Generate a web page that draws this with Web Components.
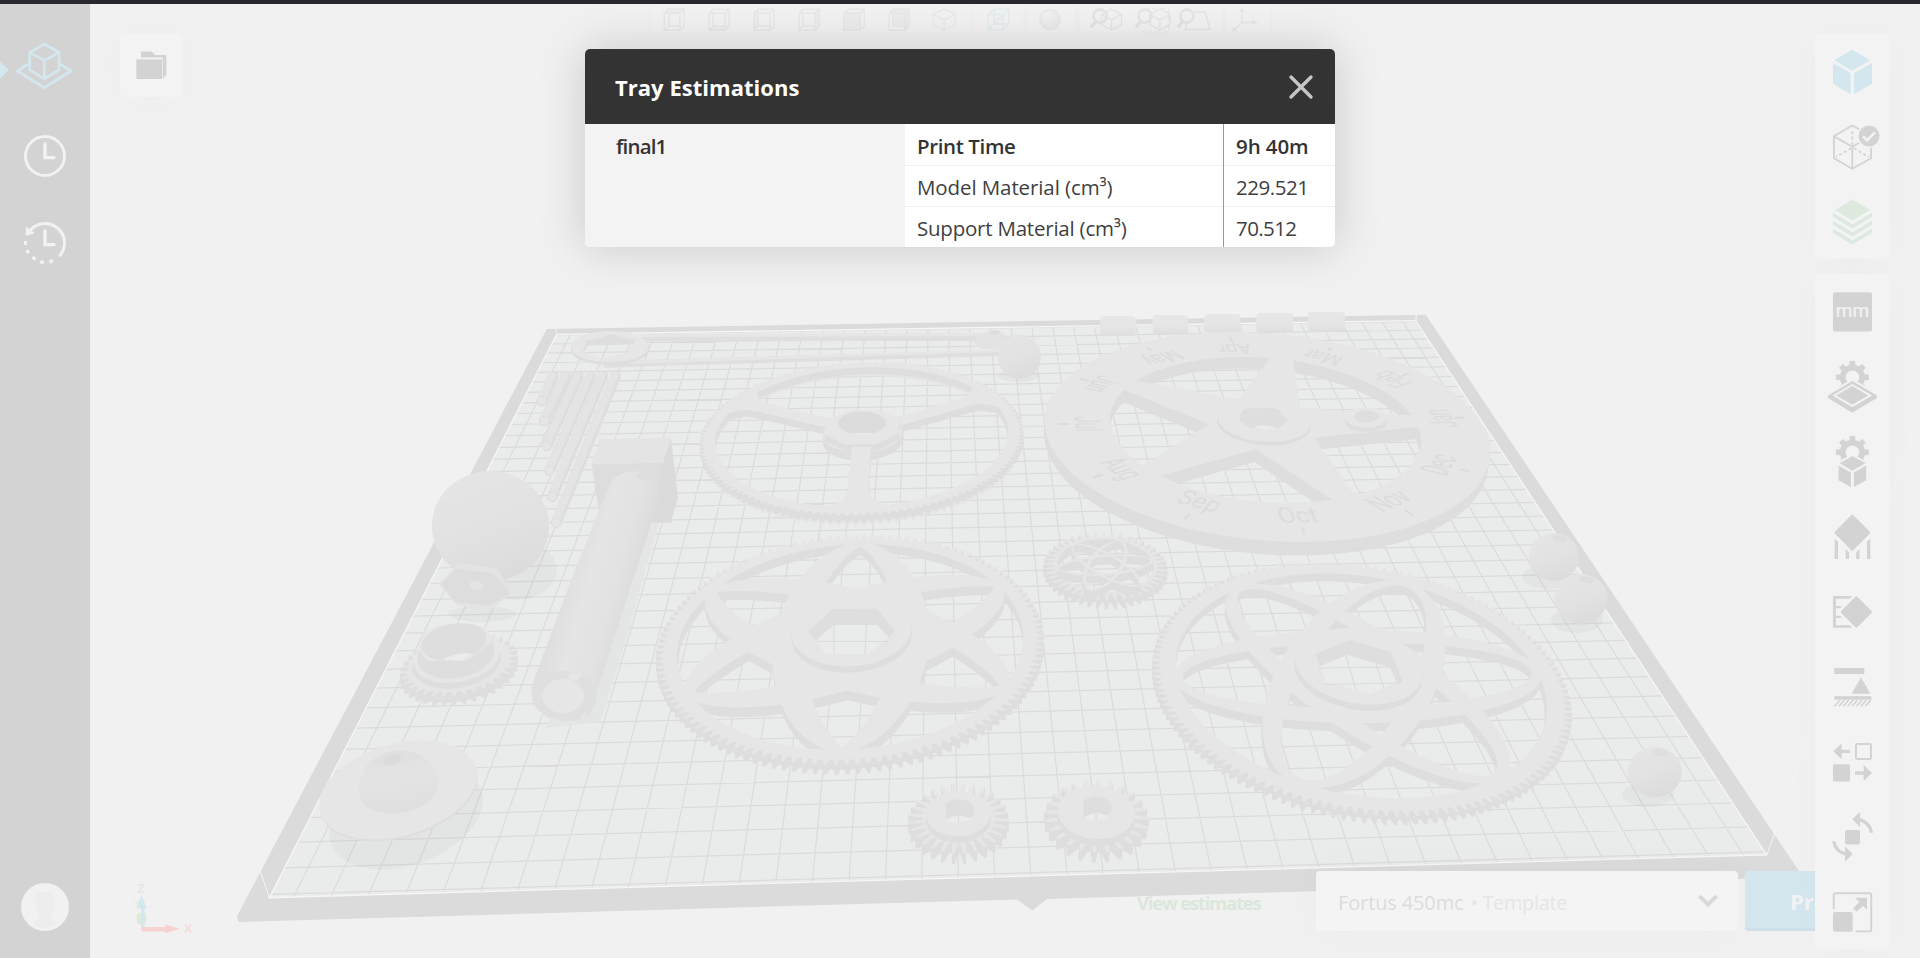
<!DOCTYPE html>
<html lang="en">
<head>
<meta charset="utf-8">
<title>Tray Estimations</title>
<style>
html,body{margin:0;height:100%;overflow:hidden;background:#f1f1f1}
body{font-family:"Open Sans","Noto Sans",sans-serif;color:#333}
</style>
</head>
<body>
<print-app>
  <side-nav slot="nav"></side-nav>
  <tray-scene slot="scene"></tray-scene>
  <view-toolbar slot="toolbar"></view-toolbar>
  <folder-button slot="folder"></folder-button>
  <tool-rail slot="rail"></tool-rail>
  <print-bar slot="print"></print-bar>
  <estimate-dialog slot="dialog" heading="Tray Estimations">
    <span slot="name"><fit-text width="49">final1</fit-text></span>
    <estimate-row strong><fit-text width="97">Print Time</fit-text><fit-text slot="value" width="71">9h 40m</fit-text></estimate-row>
    <estimate-row><fit-text width="194">Model Material (cm³)</fit-text><fit-text slot="value" width="71">229.521</fit-text></estimate-row>
    <estimate-row><fit-text width="208">Support Material (cm³)</fit-text><fit-text slot="value" width="59">70.512</fit-text></estimate-row>
  </estimate-dialog>
</print-app>
<script>
const define = (name, html, extra) => customElements.define(name, class extends HTMLElement {
  constructor(){ super(); this.attachShadow({mode:'open'}).innerHTML = typeof html === 'function' ? html(this) : html; }
  connectedCallback(){ if (extra) extra(this); }
});

define('print-app', `<style>
:host{display:grid;grid-template:4px 954px / 90px 1fr;width:1920px;height:958px;position:relative;overflow:hidden}
.top{grid-column:1/3;background:#29282f;position:relative}
.stage{position:relative}
.layer{position:absolute}
.scene{left:-90px;top:-4px}
.tb{left:562px;top:0}
.folder{left:30px;top:30px}
.print{right:50px;top:867px}
.rail{right:30px;top:30px}
.dialog{left:495px;top:45px}
</style>
<div class="top"></div><slot name="nav"></slot>
<main class="stage">
<div class="layer scene"><slot name="scene"></slot></div>
<div class="layer tb"><slot name="toolbar"></slot></div>
<div class="layer folder"><slot name="folder"></slot></div>
<div class="layer print"><slot name="print"></slot></div>
<div class="layer rail"><slot name="rail"></slot></div>
<div class="layer dialog"><slot name="dialog"></slot></div>
</main>`);

define('side-nav', `<style>
:host{display:flex;flex-direction:column;background:#d3d3d3;padding-top:22px;box-sizing:border-box;height:954px;position:relative;z-index:1}
svg{display:block;flex:none}
.user{margin-top:auto}
</style>
<svg width="90" height="88" viewBox="0 26 90 88" fill="none" stroke="#d5e7ee" stroke-width="2.7" stroke-linejoin="round">
<path d="M0 61L8.7 70L0 79Z" fill="#d5e7ee" stroke="none"/>
<path d="M44.3 44L59 52.3V70L44.3 78.8L29.7 70V52.3ZM29.7 52.3L44.3 60.7L59 52.3M44.3 60.7V78.8M28.5 64L17.3 71L44.3 87.7L71 71L60 64"/></svg>
<svg width="90" height="86" viewBox="0 114 90 86" fill="none" stroke="#f2f2f2" stroke-width="3">
<circle cx="45" cy="156" r="19.5"/><path d="M45 144V157.6H54" stroke-width="3.4" stroke-linecap="round"/></svg>
<svg width="90" height="86" viewBox="0 200 90 86" fill="none" stroke="#f2f2f2" stroke-width="3">
<path d="M30.5 230A19.5 19.5 0 0 1 45 223.500A19.5 19.5 0 0 1 59.3 256.300"/><path d="M25.8 226.5V235.8L34.8 233.3Z" fill="#f2f2f2" stroke="none"/>
<path d="M25.5 241V245M26.8 250L28.6 253.2M32.5 256.8L35.5 259.6M40.2 261.9L44 262.3M49.5 262L53 260.6" stroke-width="3.2"/>
<path d="M45 231V244.6H54" stroke-width="3.4" stroke-linecap="round"/></svg>
<svg class="user" width="90" height="80" viewBox="0 878 90 80"><circle cx="45" cy="907" r="24" fill="#f1f1f1"/>
<path d="M35.5 896Q36 892 40 892H50Q54 892 54.3 896V909Q53 913 50.5 915Q50 920 57 922Q57 925 45 929Q33 925 33 922Q40 920 39.5 915Q36 912 35.5 909Z" fill="#ededed"/></svg>`);

define('folder-button', `<style>:host{display:block;width:63px;height:63px;border-radius:5px;background:#f3f3f3;box-shadow:0 0 42px rgba(0,0,0,.02)}svg{display:block}</style>
<svg width="63" height="63" fill="#d3d3d3"><path d="M16.3 25.4H42V45H16.3Z"/><path d="M21 17.4H31.8L35 21H46.3V40.8L42.7 44.8V23.4H21Z"/></svg>`);

/* One cube outline per standard view; the shaded face marks the view. */
const tIcon = inner => `<svg width="45" height="29" viewBox="-9 0 45 29">${inner}</svg>`;
const box = (shade) => tIcon(`<g fill="none" stroke="#e7e7e7" stroke-width="1.4"><path d="M3.2 9.2L7 5.2H23.2V22L19 26.2H3.2ZM3.2 9.2H19V26.2M19 9.2L23.2 5.2"/>${shade}</g>`);
const zoomGlass = (x) => `<g fill="none" stroke="#e4e4e4"><circle cx="${x+8}" cy="12" r="6.6" stroke-width="2.6"/><path d="M${x+4} 17L${x-1} 23.5" stroke-width="3.6"/></g>`;
const smallCube = 'M20 5L30 10.5V20.5L20 26L10 20.5V10.5ZM10 10.5L20 16L30 10.5M20 16V26';
define('view-toolbar', `<style>
:host{display:flex;height:29px}
div{display:flex;background:#f2f2f2;box-shadow:0 1px 14px rgba(0,0,0,.014);border-radius:0 0 4px 4px;margin-right:3px}
.views{padding-right:4px}.wire{padding:0 2px;margin-right:5px}.shade{padding-right:2px;margin-right:5px}.zoom{padding-left:4px}
svg{display:block;flex:none}</style>
<div class="views">
${box('<path d="M3.2 9.2L7 5.2H23.2L19 9.2Z" fill="#ededed"/><path d="M8 10V22L4 26M8 22H19"/>')}
${box('<path d="M3.2 26.2L7 22H23.2L19 26.2Z" fill="#ededed"/><path d="M7 22V10"/>')}
${box('<path d="M3.2 9.2L7 5.2V22L3.2 26.2Z" fill="#ededed"/><path d="M7 22H19"/>')}
${box('<path d="M19 9.2L23.2 5.2V22L19 26.2Z" fill="#ededed"/><path d="M7 22H19M7 10V22L3 26"/>')}
${box('<path d="M3.2 9.2H19V26.2H3.2Z" fill="#ececec"/>')}
${box('<path d="M7 5.2H23.2V22H7Z" fill="#ececec"/><path d="M3.2 9.2H19V26.2"/>')}
${tIcon('<path d="M13.3 4.6L24.3 10.3V20.7L13.3 26.6L2.3 20.7V10.3ZM2.3 10.3L13.3 16L24.3 10.3M13.3 16V26.6" fill="none" stroke="#e8e8e8" stroke-width="1.3"/>')}
</div>
<div class="wire">${tIcon('<g fill="none" stroke="#e2ebef" stroke-width="1.3"><path d="M3 10.5L9 5.2H24V20L18 26.2H3ZM3 10.5H18V26.2M18 10.5L24 5.2M9 5.2V20M9 20H24M3 26L18 10.5"/></g>')}</div>
<div class="shade"><svg width="45" height="29"><defs><radialGradient id="s" cx=".4" cy=".32"><stop offset="0" stop-color="#f2f2f2"/><stop offset="1" stop-color="#eaeaea"/></radialGradient></defs><circle cx="22" cy="15.500" r="10.3" fill="url(#s)" stroke="#e6e6e6"/></svg></div>
<div class="zoom">
<svg width="49" height="29">${zoomGlass(8)}<path transform="translate(7.5 0)" d="${smallCube}" fill="none" stroke="#e5e5e5" stroke-width="1.4"/></svg>
<svg width="44" height="29">${zoomGlass(4)}<path transform="translate(7 0)" d="${smallCube}" fill="none" stroke="#e5e5e5" stroke-width="1.4"/><path d="M11 4.500H35.500V28H9" fill="none" stroke="#e7e7e7" stroke-width="1.4" stroke-dasharray="5 3"/></svg>
<svg width="45" height="29">${zoomGlass(2)}<path d="M17 8H28L33 25.5H8L10 19" fill="none" stroke="#e5e5e5" stroke-width="1.5"/></svg>
</div>
<div>${tIcon('<g transform="translate(-4 0)"><path d="M12 6V18.5L5 25M12 18.5H24" fill="none" stroke="#e8e8e8" stroke-width="1.5"/><path d="M12 3L15 8H9ZM28 18.5L22 15.5V21.5ZM2 28L3 22.5L7.5 26.5Z" fill="#e7e7e7"/></g>')}</div>`);

/* A toothed wheel outline for the settings icons. */
function cog(cx, cy){
  let d = '';
  for (let i = 0; i < 8; i++){
    for (const [o, r] of [[-.39,12.2],[-.2,12.6],[-.16,16.2],[.16,16.2],[.2,12.6],[.39,12.2]]){
      const a = i*Math.PI/4 - Math.PI/2 + o;
      d += (d ? 'L' : 'M') + (cx + r*Math.cos(a)).toFixed(1) + ' ' + (cy + r*Math.sin(a)).toFixed(1);
    }
  }
  return `<path d="${d}ZM${cx-7} ${cy}a7 7 0 1 0 14 0a7 7 0 1 0 -14 0Z" fill-rule="evenodd" stroke="#d3d3d3" stroke-width=".6"/>`;
}
const rail = [
[
`<g fill="#d5e7ee"><path d="M37.3 15.8L55.2 26.3L37.3 36.7L19.5 26.3ZM18 29L35.7 38.9V60.3L18 49.7ZM57 29L39 38.9V60.3L57 49.7Z"/></g>`,
`<g fill="none" stroke="#d3d3d3" stroke-width="1.8"><path d="M44 20.2L37.3 16.5L18.9 27.3V49.3L37.3 59.7L56.1 49.3V38.8M18.9 27.3L37.3 37.7L44 34M37.3 37.7V59.7"/><path d="M37.3 36V20M36 39.2L21 48M39 39.2L54 48" stroke-dasharray="3 2.4"/></g><circle cx="54" cy="27" r="10.5" fill="#d3d3d3"/><path d="M48 27.3L52 31.5L60 23.3" fill="none" stroke="#f3f3f3" stroke-width="2.6"/>`,
`<g fill="#dde8de"><path d="M37.3 15.6L55 26L37.3 36.4L20 26Z"/>${[0,8,16].map(o=>`<path transform="translate(0 ${o})" d="M18 28.7L37.3 40.2L57 28.7V32.7L37.3 44.4L18 32.7Z"/>`).join('')}</g>`
],[
`<rect x="18" y="18.3" width="39" height="39.2" rx="2"/><text x="37.5" y="43" text-anchor="middle" font-family="Roboto,sans-serif" font-weight="400" font-size="19" textLength="33.5" fill="#f3f3f3" stroke="#f3f3f3" stroke-width=".2">mm</text>`,
`${cog(37.4,28.3)}<path d="M37.3 29.5L66 47L37.3 66L9 47Z" fill="#f3f3f3"/><path d="M37.3 32L62 46.5V49L37.3 63.7L13 49V46.5ZM37.3 34.9L17.5 46.6L37.3 58.2L57.2 46.6Z" fill-rule="evenodd"/><path d="M37.3 37L53.3 46.4L37.3 55.8L21.3 46.4Z"/>`,
`${cog(37.4,28.3)}<path d="M37.3 29.8L54 39V60L37.3 66L21 60V39Z" fill="#f3f3f3"/><path d="M37.3 32L50.6 39.3L37.3 46.7L24.6 39.3ZM23.6 41.6L35.8 48.4V63L23.6 56.2ZM51.2 41.6L38.9 48.4V63L51.2 56.2Z"/>`,
`<path d="M37.3 16.8L54 33.7L37.3 50.6L20.8 33.7Z" stroke="#d3d3d3" stroke-width="2.4" stroke-linejoin="round"/><path d="M19.7 39.5L23 42.8V60H19.7ZM30.7 50L34 53.3V60H30.7ZM44.5 50L41.2 53.3V60H44.5ZM55.3 39.5L52 42.8V60H55.3Z"/>`,
`<path d="M41.4 23.7L55.6 38L41.4 52.3L27.1 38Z" stroke="#d3d3d3" stroke-width="2.6" stroke-linejoin="round"/><path d="M18 22H37L34.7 24.8H20.8V32H27L25 34.2H20.8V41.8H25L27 44H20.8V51.2H34.7L37 53.8H18Z"/>`,
`<rect x="19.3" y="19" width="30" height="6"/><path d="M46 28.3L55.4 44.8H36.7Z"/><rect x="19.3" y="47.2" width="37" height="3.5"/><path d="${[0,1,2,3,4,5,6,7].map(i=>`M${19.5+i*4.4} 57.3L${25+i*4.4} 51`).join('')}" stroke="#d3d3d3" stroke-width="1.5"/>`,
`<path d="M18.3 27.3L26.6 19.4V25.7H35V29H26.6V35.3ZM57 49L48.6 41V47.3H40V50.7H48.6V57Z"/><rect x="41" y="20" width="15" height="15" rx="1" fill="none" stroke="#d3d3d3" stroke-width="1.9"/><rect x="18" y="40.3" width="17" height="17.3" rx="1.6"/>`,
`<rect x="30" y="31" width="15" height="14.6" rx="2"/><path d="M37.3 20.3L45 13V28ZM37.8 55L30 47.6V62.8Z"/><path d="M44 20.4Q54.5 23 56.6 33.8M18.7 42.2Q20.5 52.5 31 55" fill="none" stroke="#d3d3d3" stroke-width="3.2"/>`,
`<path d="M18.8 35V21Q18.8 19.3 20.5 19.3H54.6Q56.2 19.3 56.2 21V55.8Q56.2 57.4 54.6 57.4H40.5" fill="none" stroke="#d3d3d3" stroke-width="1.9"/><rect x="18" y="38" width="19.7" height="19.8" rx="2"/><path d="M40 23.7H52V36L47.8 31.8L41.7 37.7L38.2 34.3L44.3 28Z"/>`
]];
define('tool-rail', `<style>
:host{display:flex;flex-direction:column;gap:15px;width:75px}
section{display:grid;grid-auto-rows:75px;border-radius:5px;background:#f3f3f3;box-shadow:0 0 42px rgba(0,0,0,.02)}
svg{display:block}</style>` + rail.map(g => '<section>' + g.map(i => `<svg width="75" height="75" fill="#d3d3d3">${i}</svg>`).join('') + '</section>').join(''));

define('print-bar', `<style>
:host{display:flex;align-items:stretch;height:60px;width:733px;font-size:20px;line-height:60px}
.est{width:179px;box-sizing:border-box;color:#dce7dc;font-weight:700;font-size:18.5px;line-height:64px}
.select{display:flex;width:422px;margin-right:7px;padding:0 20px 0 22px;box-sizing:border-box;background:#f4f4f4;border-radius:4px;color:#dcdcdc;box-shadow:0 0 42px rgba(0,0,0,.028);line-height:63px}
.select i{font-style:normal;color:#e6e6e6;margin-left:7px}
.select svg{margin:23px 0 0 auto}
.btn{width:125px;background:#d4e7ee;border-bottom:3px solid #cfe1e8;box-sizing:border-box;border-radius:4px;color:#f3f3f3;font-weight:700;font-size:22px;padding-left:45px;line-height:60px}</style>
<div class="est"><fit-text width="122">View estimates</fit-text></div>
<div class="select"><fit-text width="124">Fortus 450mc</fit-text><i><fit-text width="95">• Template</fit-text></i>
<svg width="20" height="14" fill="none" stroke="#d8d8d8" stroke-width="3.800"><path d="M1.5 2L10 10.5L18.500 2"/></svg></div>
<div class="btn">Print</div>`);

define('estimate-row', el => `<style>
:host{display:grid;grid-template-columns:319px 1fr;height:40px;border-bottom:1px solid #f0f0f0;line-height:42px;font-size:20.5px;color:#3f3f3f}
:host(:last-child){border-bottom:0}
:host([strong]){font-weight:600;color:#333;height:41px;line-height:45px}
.k{padding-left:12px;border-right:1px solid #999;margin-bottom:-1px}
.v{padding-left:12px}</style><div class="k"><slot></slot></div><div class="v"><slot name="value"></slot></div>`);

define('estimate-dialog', el => `<style>
:host{display:block;width:750px;height:198px;border-radius:5px;overflow:visible;box-shadow:0 0 48px rgba(0,0,0,.17)}
header{display:flex;align-items:center;justify-content:space-between;height:75px;background:#333;border-radius:5px 5px 0 0;padding:0 21px 0 30px;box-sizing:border-box;color:#fff;font-weight:700;font-size:22px}
.body{display:grid;grid-template-columns:320px 1fr;height:123px;background:#fff;border-radius:0 0 5px 5px;overflow:hidden}
.name{background:#f3f3f3;padding-left:31px;line-height:45px;font-size:20.5px;font-weight:600}
.rows{display:flex;flex-direction:column}</style>
<header><fit-text width="183">${el.getAttribute('heading') || 'Tray Estimations'}</fit-text>
<svg width="26" height="26" stroke="#c6c6c6" stroke-width="3.4" stroke-linecap="round"><path d="M3 3L23 23M23 3L3 23"/></svg></header>
<div class="body"><div class="name"><slot name="name"></slot></div><div class="rows"><slot></slot></div></div>`);

/* ---- Build tray: a 41.3 x 36.2 cell plate seen in perspective ---- */
const U = 41.3, V = 36.2, TOP = '#e6e6e6', SIDE = '#dedede';
const corner = [[556.7,334.3],[1415.7,320.7],[1766.7,855],[269.3,897.7]];
const cam = (() => {
  const [[x0,y0],[x1,y1],[x2,y2],[x3,y3]] = corner;
  const a=x1-x2,b=x3-x2,s=x0-x1+x2-x3,c=y1-y2,d=y3-y2,t=y0-y1+y2-y3,den=a*d-b*c;
  const g=(s*d-b*t)/den,h=(a*t-s*c)/den;
  return [[x1-x0+g*x1,x3-x0+h*x3,x0],[y1-y0+g*y1,y3-y0+h*y3,y0],[g,h,1]];
})();
const mat = z => { const k = z/3267, v = [969,2999,1]; return cam.map((r,i) => [r[0]/U, r[1]/V, r[2]-k*v[i]]); };
const proj = (u,v,z=0) => { const m = mat(z), w = m[2][0]*u+m[2][1]*v+m[2][2]; return [(m[0][0]*u+m[0][1]*v+m[0][2])/w,(m[1][0]*u+m[1][1]*v+m[1][2])/w]; };
const unproj = (x,y,z=0) => {
  const m = mat(z), a=m[0][0]-x*m[2][0], b=m[0][1]-x*m[2][1], c=x*m[2][2]-m[0][2], d=m[1][0]-y*m[2][0], e=m[1][1]-y*m[2][1], f=y*m[2][2]-m[1][2], q=a*e-b*d;
  return [(c*e-b*f)/q,(a*f-c*d)/q];
};
const f1 = n => n.toFixed(1);
const line = (pts, z) => 'M' + pts.map(p => proj(p[0],p[1],z).map(f1).join(' ')).join('L') + 'Z';
const scr = pts => 'M' + pts.map(p => f1(p[0])+' '+f1(p[1])).join('L') + 'Z';
/* Circle on the plane z through the left, right, top and bottom points seen on screen. */
function circleAt(z, pts){
  const p = pts.map(q => unproj(q[0],q[1],z));
  let cx = p.reduce((s,q)=>s+q[0],0)/4, cy = p.reduce((s,q)=>s+q[1],0)/4, r = 1;
  for (let k=0;k<200;k++){
    const D = p.map(q=>Math.hypot(q[0]-cx,q[1]-cy)); r = D.reduce((a,b)=>a+b)/4;
    let gx=0,gy=0; p.forEach((q,i)=>{gx+=(D[i]-r)*(q[0]-cx)/D[i];gy+=(D[i]-r)*(q[1]-cy)/D[i];});
    cx+=gx*.4; cy+=gy*.4;
  }
  return {x:cx,y:cy,r};
}
const round = (c,r,n=90,ph=0) => Array.from({length:n},(_,i)=>[c.x+r*Math.cos(ph+i*2*Math.PI/n),c.y+r*Math.sin(ph+i*2*Math.PI/n)]);
const toothed = (c,r,n,depth) => { const out=[]; for(let i=0;i<n;i++) for(const [o,k] of [[0,0],[.2,.1],[.4,1],[.62,1],[.82,.1]]){ const a=(i+o)*2*Math.PI/n, q=r-depth+depth*k; out.push([c.x+q*Math.cos(a),c.y+q*Math.sin(a)]);} return out; };
/* Solid: a set of outlines swept from the base to the top. */
function solid(parts, z0, z1, top=TOP, side=SIDE){
  const n = Math.max(4, Math.ceil((z1-z0)*1.6)); let d = '';
  for (let i=0;i<n;i++){ const z=z0+(z1-z0)*i/n; d += parts.map(p=>`<path d="${p.map(q=>line(q,z)).join('')}"/>`).join(''); }
  return `<g fill="${side}" fill-rule="evenodd">${d}</g><g fill="${top}" fill-rule="evenodd">${parts.map(p=>`<path d="${p.map(q=>line(q,z1)).join('')}"/>`).join('')}</g>`;
}
/* Closed lens along the diameter at angle a. */
function lens(c, R, a, w, p){
  const o=[]; const P=(t,s)=>{const l=R*t,h=s*R*w*Math.pow(Math.max(0,1-t*t),p);return [c.x+l*Math.cos(a)-h*Math.sin(a),c.y+l*Math.sin(a)+h*Math.cos(a)];};
  for(let i=0;i<=48;i++) o.push(P(-Math.cos(i*Math.PI/48),1));
  for(let i=1;i<48;i++) o.push(P(Math.cos(i*Math.PI/48),-1));
  return o;
}
const ball = (x,y,rx,ry=rx,hole=false) => `<ellipse cx="${x}" cy="${y}" rx="${rx}" ry="${ry}" fill="url(#ball)"/>` + (hole?`<ellipse cx="${x+3}" cy="${y-ry*.8}" rx="7" ry="3.4" fill="#dedede" transform="rotate(8 ${x} ${y})"/>`:'');
const shadow = (x,y,rx,ry,r=0) => `<ellipse cx="${x}" cy="${y}" rx="${rx}" ry="${ry}" fill="#000" opacity=".026" transform="rotate(${r} ${x} ${y})"/>`;

function buildPlate(){
  let s = `<path d="${scr([[546.7,329],[1425.7,314.7],[1803,877],[1047,899],[1032.4,910.5],[1017,899.4],[239,922],[236.7,916.7]])}" fill="#dbdbdb"/>`;
  s += `<path d="${scr(corner)}" fill="#eaeceb"/>`;
  let g='';
  for(let i=0;i<=40;i++){const a=proj(i+.65,0),b=proj(i+.65,V);g+=`M${a.map(f1)}L${b.map(f1)}`;}
  for(let i=0;i<=36;i++){const a=proj(0,i+.08),b=proj(U,i+.08);g+=`M${a.map(f1)}L${b.map(f1)}`;}
  s += `<path d="${g}" stroke="#dbdbdb" stroke-width="1.25" fill="none"/><path d="${scr(corner)}" fill="none" stroke="#f6f6f6" stroke-width="1.3"/>`;
  s += `<g fill="none" stroke="#f6f6f6" stroke-width="1"><path d="M269.300 897.700L260.500 872"/><path d="M1766.700 855L1776 830"/><g stroke="#f4f4f4"><path d="M260.500 872L220 753L190 655M1776 830L1813 720L1897 480L1920 413M556.700 334.300L552 300L545 262M1415.700 320.700L1419 296"/></g></g>`;
  return s;
}
function buildWrench(){
  const hex='M586 341L611.700 334.500L635 340L627 353.300L603 359L583 352Z';
  return `<g>
  <path d="M640 334.500L984 333.500V341L640 341.500Z" fill="#dfdfdf"/><path d="M640 334L984 333V336L640 337Z" fill="${TOP}"/>
  <path d="M604 363L640 360L1000 350V356L640 366.500L604 368Z" fill="#dfdfdf"/><path d="M620 361L1000 349.500V352L620 364Z" fill="${TOP}"/>
  <path fill-rule="evenodd" fill="${SIDE}" d="M571 346V352A39.300 16 0 0 0 649 350V344Z${hex}"/>
  <path fill-rule="evenodd" fill="${TOP}" d="M571 347A38.800 15.600 0 0 1 648.600 346A38.800 15.600 0 0 1 571 347Z${hex}"/>
  <path d="M586 341L611.700 334.500L635 340L632 344L611 338L588 344L585 351L583 352Z" fill="${SIDE}"/>
  <path d="M973 341Q985 330 995 330.500Q1004 331 1010 340L1003 349H980Z" fill="#e3e3e3"/><ellipse cx="995" cy="332" rx="5" ry="2" fill="#dcdcdc"/></g>`
  + shadow(1019,376,21,6) + ball(1019.3,356.7,21.7,22.2);
}
function buildRods(){
  const ends=[[966,303],[973,363],[981,437],[989,512],[997,590],[1009,668]], tops=[1000,1038,1075,1112,1148,1187];
  return ends.map((e,i)=>{
    const x0=220+tops[i]/3,y0=376,x1=220+e[0]/3,y1=300+e[1]/3;
    return `<path d="M${f1(x0)} ${y0}L${f1(x1)} ${f1(y1)}" stroke="#dedede" stroke-width="10.600" stroke-linecap="round"/><path d="M${f1(x0-1.2)} ${y0-.5}L${f1(x1-1.2)} ${f1(y1)}" stroke="#e4e4e4" stroke-width="7.500" stroke-linecap="round"/><circle cx="${f1(x1)}" cy="${f1(y1)}" r="4.800" fill="#e5e5e5" stroke="#dddddd" stroke-width="1"/>`;}).join('');
}
function buildShaft(){
  return `<path d="M665 500L626 640L600 722L545 728L560 700Z" fill="#e4e6e5"/>
  <path d="M591.700 464L662.700 462.700L671.700 522.700L598.500 510Z" fill="#dddddd"/><path d="M662.700 462.700L671 437.700L678 497.300L670.700 522.700H650Z" fill="#dbdbdb"/><path d="M600 439.300L671 437.700L662.700 462.700L591.700 464Z" fill="#e4e4e4"/>
  <path d="M608 488Q618 468 640 472L658 487Q660 500 654 515L590 713Q570 728 548 718Q528 705 532 685L571 580Z" fill="url(#shaft)"/>
  <path d="M531 688Q536 670 566 671Q596 675 596 700Q592 722 566 721Q537 718 532 698L537 696V691Z" fill="#dfdfdf"/><ellipse cx="563" cy="696" rx="21" ry="17" fill="#e6e6e6"/><path d="M570 672L582 674L577 681L567 679ZM580 716L587 712L584 720Z" fill="#e6e6e6"/><path d="M637 477L640 471L652 476L647 481Z" fill="#dddddd"/>`;
}
function buildThreeSpoke(){
  const z=8, c=circleAt(z,[[700,442],[1022.500,437],[867,361],[857,516]]), ri=c.r*.905;
  let s=`<g opacity=".6" fill="#e2e3e3" fill-rule="evenodd"><path d="${line(toothed(c,c.r,130,.2),-3)}${line(round(c,ri),-3)}"/></g>`;
  const ends=[[736,401],[988,395.5],[857,509]].map(p=>unproj(p[0],p[1],z));
  const spokes=ends.map(e=>{const a=Math.atan2(e[1]-c.y,e[0]-c.x),nx=-Math.sin(a),ny=Math.cos(a),o=[];
    const P=(r,h)=>o.push([c.x+r*Math.cos(a)+h*nx,c.y+r*Math.sin(a)+h*ny]);
    P(c.r*.12,.36);P(c.r*.74,.42);P(c.r*.82,.5);P(c.r*.87,.9);P(c.r*.93,1.5);P(c.r*.93,-1.5);P(c.r*.87,-.9);P(c.r*.82,-.5);P(c.r*.74,-.42);P(c.r*.12,-.36);return [o];});
  s+=solid([[toothed(c,c.r,130,.18),round(c,ri)],...spokes],0,z);
  const h=circleAt(z,[[828,438],[897,436],[862,414],[862,456]]);
  s+=solid([[round(h,h.r)]],0,z+1)+solid([[round(h,h.r,8,.39)]],z+1,z+8);
  return s+`<path d="M852 447L871 446.500L869 480H849Z" fill="${TOP}"/><ellipse cx="862" cy="423" rx="24" ry="11.300" fill="#dcdcdc"/><path d="M853 433.500L859 433H872V434.500H855Z" fill="#eaeceb"/>`;
}
function atomGear(z, ext, inner, teeth, depth, tip, w1, p1, w2, p2){
  const c=circleAt(z,ext), t=unproj(tip[0],tip[1],z), a=Math.atan2(t[1]-c.y,t[0]-c.x), R=c.r*inner;
  const parts=[[toothed(c,c.r,teeth,depth),round(c,R)]];
  for(let i=0;i<3;i++) parts.push([lens(c,R*1.02,a+i*Math.PI/3,w1,p1),lens(c,R*.97,a+i*Math.PI/3,w2,p2)]);
  return {c,R,a,svg:solid(parts,0,z)};
}
function buildGearB(){
  const z=9, g=atomGear(z,[[657.500,652],[1042.500,641],[860,533.500],[846.6,766]],.893,124,.25,[860,543],.44,.55,.27,.8);
  const e=circleAt(z+6,[[792,632],[911,631],[852,596],[847,666.5]]);
  return g.svg+solid([[round(e,e.r),round(e,e.r*.71,6,0)]],z,z+6)
  +`<path d="${scr([[808,631],[834,609],[877,609],[895,631],[888,638],[877,625],[834,625],[817,641]])}" fill="#dedede"/>`+`<path d="${scr([[817,639],[834,625],[877,625],[888,637],[869,654],[825,654]])}" fill="#eaeceb"/><path d="M834 625V654M866.500 625L865 654M818 641.500H889" stroke="#dbdbdb" stroke-width="1.200"/>`;
}
function buildGearC(){
  const z=8, g=atomGear(z,[[1155,675],[1570.500,712],[1316.5,561],[1403,818]],.885,140,.24,[1407,581],.41,.5,.3,.5);
  const e=circleAt(z+6,[[1297,664],[1420.5,680],[1352,628],[1370,705.5]]);
  return g.svg+solid([[round(e,e.r)]],z,z+6)
  +`<path d="${scr([[1349,640],[1391,652.3],[1403,681.7],[1370,694.3],[1325,682.3],[1315.6,654.300]])}" fill="#dedede"/><path d="${scr([[1347,655],[1390,667.500],[1397,683],[1370,694.300],[1325,682.300],[1320,666]])}" fill="#eaeceb"/><path d="M1319 668L1390 667M1324 684.500L1397 683M1346 656L1356 690M1376 664L1384 689" stroke="#dbdbdb" stroke-width="1.200"/>`;
}
function buildGearD(){
  const z=9, ext=[[1043.500,568],[1168,567],[1105,532],[1108,600]], c=circleAt(z,ext), t=unproj(1076,546,z), a=Math.atan2(t[1]-c.y,t[0]-c.x), R=c.r*.77;
  let s=solid([[toothed(c,c.r,44,.4),round(c,R)]],0,z);
  const parts=[]; for(let i=0;i<3;i++) parts.push([lens(c,R*1.02,a+i*Math.PI/3,.38,.6),lens(c,R*.98,a+i*Math.PI/3,.31,.6)]);
  return s+solid(parts,1,z);
}
function hubGear(ext,hub,hole,teeth){
  const z=9.5,c=circleAt(z,ext),h=circleAt(z+6,hub);
  return solid([[toothed(c,c.r,teeth,.42)]],0,z)+solid([[round(h,h.r)]],z,z+6)+
  `<path d="M${hole[0]} ${hole[1]+4}Q${hole[0]+8} ${hole[1]-1} ${hole[0]+16} ${hole[1]}A15 11 0 0 1 ${hole[0]+25} ${hole[1]+18}Q${hole[0]+14} ${hole[1]+27} ${hole[0]+1} ${hole[1]+20}Z" fill="#dedede"/>
  <path d="M${hole[0]+1} ${hole[1]+20.500}Q${hole[0]+13} ${hole[1]+13} ${hole[0]+25} ${hole[1]+19}Q${hole[0]+14} ${hole[1]+27} ${hole[0]+1} ${hole[1]+20.500}Z" fill="#eaeceb"/><path d="M${hole[0]+13} ${hole[1]+17}v6" stroke="#dadada" stroke-width="1.200"/>`;
}
function buildMonths(){
  const z=13, q=(x,y)=>unproj(1020+x/3,300+y/3,z);
  const c=circleAt(z,[[1045.7,420],[1489.3,450],[1233,331.7],[1303,542.500]]), R=circleAt(z,[[1110.700,420],[1420.500,441],[1239,356.700],[1287,503.300]]);
  const ang=p=>Math.atan2(p[1]-R.y,p[0]-R.x);
  const hole=(a,b,...rest)=>{ const A=q(...a),B=q(...b); let s=ang(A),e=ang(B); while(e<s)e+=2*Math.PI; const o=[]; for(let i=0;i<=20;i++){const t=s+(e-s)*i/20;o.push([R.x+R.r*Math.cos(t),R.y+R.r*Math.sin(t)]);} return o.concat(rest.map(r=>q(...r))); };
  const holes=[hole([350,242],[750,173],[656,298]),hole([820,182],[1172,345],[1105,343],[840,323]),hole([1195,380],[1000,583],[883,413]),hole([935,598],[422,527],[708,448]),hole([372,497],[313,270],[567,373])];
  let s=solid([[round(c,c.r,140),...holes]],-1,z);
  const h=circleAt(z+4,[[1216,418],[1312,420],[1262,399],[1268,441]]);
  s+=solid([[round(h,h.r)]],z,z+4);
  s+=`<path d="M1240 418Q1240 409 1252 407.500L1255 409Q1270 406 1280 410L1281 415L1288 419L1284 424L1279 428H1250L1240 421Z" fill="#dedede"/><path d="M1254 426L1261 425.500Q1270 425 1275 427.500Q1268 431 1259 429Z" fill="#eaeceb"/>`;
  s+=`<path d="M1345 417V422A21 10 0 0 0 1387 422V417Z" fill="#dedede"/><ellipse cx="1366" cy="417.500" rx="21" ry="10" fill="${TOP}"/><ellipse cx="1366.500" cy="416.500" rx="12" ry="6" fill="#dedede"/>`;
  const names={Oct:[832,645],Sep:[540,603],Aug:[307,505],Jul:[205,372],Jun:[248,253],May:[430,175],Apr:[645,147],Mar:[908,172],Feb:[1115,238],Jan:[1260,355],Dec:[1255,493],Nov:[1105,600]};
  for(const [n,p] of Object.entries(names)){
    const P=q(...p), a=Math.atan2(P[1]-c.y,P[0]-c.x), k=.122, O=proj(...P,z);
    const X=proj(P[0]+.1*Math.sin(a),P[1]-.1*Math.cos(a),z), Y=proj(P[0]+.1*Math.cos(a),P[1]+.1*Math.sin(a),z);
    const m=[(X[0]-O[0])*8*k,(X[1]-O[1])*8*k,(Y[0]-O[0])*12.5*k,(Y[1]-O[1])*12.5*k].map(v=>v.toFixed(3));
    s+=`<text transform="matrix(${m} ${O.map(f1)})" y="3.500" text-anchor="middle" font-family="Roboto,sans-serif" font-size="10" fill="#dcdcdc">${n}</text>`;
    const t1=proj(c.x+c.r*.89*Math.cos(a),c.y+c.r*.89*Math.sin(a),z),t2=proj(c.x+c.r*.94*Math.cos(a),c.y+c.r*.94*Math.sin(a),z);
    s+=`<path d="M${t1.map(f1)}L${t2.map(f1)}" stroke="#dcdcdc" stroke-width="2"/>`;
  }
  return s;
}
function buildPegs(){
  return [[240,347,48,107],[398,504,45,103],[553,661,42,97],[709,819,39,97],[864,975,36,95]].map(([a,b,t,d])=>
   `<rect x="${f1(1020+a/3)}" y="${f1(300+t/3)}" width="${f1((b-a)/3)}" height="${f1((d-t)/3)}" rx="3.500" fill="url(#peg)"/>`).join('');
}
function buildCollar(){
  const pt=(cx,cy,rx,ry,a)=>{const r=-.2,x=rx*Math.cos(a),y=ry*Math.sin(a);return [cx+x*Math.cos(r)-y*Math.sin(r),cy+x*Math.sin(r)+y*Math.cos(r)];};
  const teeth=(dy)=>{const o=[];for(let i=0;i<34;i++)for(const [t,k] of [[0,.87],[.3,.88],[.45,1],[.62,1],[.8,.88]])o.push(pt(459,664+dy,60*k,31*k,(i+t)*2*Math.PI/34));return scr(o);};
  const el=(cx,cy,rx,ry,f)=>`<ellipse cx="${cx}" cy="${cy}" rx="${rx}" ry="${ry}" transform="rotate(-11 ${cx} ${cy})" fill="${f}"/>`;
  let s=''; for(let i=10;i>=0;i--) s+=`<path d="${teeth(i)}" fill="${i?SIDE:TOP}"/>`;
  return s+el(457,659,45,26,TOP)+el(457,662,45,26,SIDE)+el(457,657,44,25,TOP)+el(456,654,39,24,SIDE)
   +`<path d="M418 646L424 631L444 624H474L488 630L494 645L466 667H427Z" fill="${TOP}"/><path d="M420 651L427 661H466L493 641L492 647L467 667H427Z" fill="${SIDE}"/>`
   +el(454,642,33,18,SIDE)+`<path d="M443 660Q456 651 473 654L463 660Z" fill="#eaeceb"/>`;
}
function buildHat(){
  return shadow(406,817,80,48,-20)+`<g transform="rotate(-16 398 790)"><ellipse cx="398" cy="792" rx="81" ry="46" fill="#dedede"/><ellipse cx="398" cy="790" rx="81" ry="46" fill="${TOP}"/></g>
  <path d="M358.500 793Q358 764 385 753Q410 745 429 761Q440 770 439 783Q434 808 402 813Q364 817 358.500 793Z" fill="url(#dome)"/><ellipse cx="392" cy="760" rx="9.300" ry="5.300" fill="#dbdbdb" transform="rotate(-12 392 760)"/>`;
}
function buildNut(){
  return shadow(482,614,34,8)+`<path d="M438.700 584L459 563L496 568L512.500 591.500L491.700 610L456.700 605Z" fill="#e3e3e3"/><path d="M441 585L456 568.500L494 574L510 594L491 605.500L456 602Z" fill="#dddddd"/><ellipse cx="476.500" cy="585.500" rx="6.800" ry="4.500" fill="#e4e4e4" transform="rotate(12 476 585)"/>`;
}
const axes = `<g font-family="Open Sans,sans-serif" font-weight="700" font-size="13"><path d="M138 913A5 7 0 1 0 145 913Z" fill="#dcead8"/><path d="M141.700 930V908H137L141.700 896.500L146 908H144V930Z" fill="#d3e7ee" stroke="#d3e7ee"/><path d="M141.700 927H165V924.300L180 929L165 933.500V931.500H141.700Z" fill="#f6d3d2"/><text x="137" y="892.500" fill="#e1e8ed">Z</text><text x="184" y="932.500" fill="#f3dedd">X</text><text x="134" y="906" font-size="9" fill="#e8ece7">Y</text></g>`;

define('tray-scene', () => `<style>:host{display:block;width:1920px;height:958px}svg{display:block}</style>
<svg width="1920" height="958" viewBox="0 0 1920 958">
<defs>
<linearGradient id="ball" x1=".3" y1="0" x2=".7" y2="1"><stop offset="0" stop-color="#e5e5e5"/><stop offset=".5" stop-color="#e2e2e2"/><stop offset="1" stop-color="#dbdbdb"/></linearGradient>
<linearGradient id="dome" x1=".4" y1="0" x2=".6" y2="1"><stop offset="0" stop-color="#dfdfdf"/><stop offset=".4" stop-color="#e4e4e4"/><stop offset="1" stop-color="#dfdfdf"/></linearGradient>
<linearGradient id="peg" x1="0" y1="0" x2="0" y2="1"><stop offset="0" stop-color="#e7e7e7"/><stop offset=".6" stop-color="#e5e5e5"/><stop offset="1" stop-color="#dedede"/></linearGradient>
<linearGradient id="shaft" gradientUnits="userSpaceOnUse" x1="560" y1="590" x2="632" y2="610"><stop offset="0" stop-color="#dedede"/><stop offset=".35" stop-color="#e5e5e5"/><stop offset=".7" stop-color="#e2e2e2"/><stop offset="1" stop-color="#dbdbdb"/></linearGradient>
</defs>
${buildPlate()}${buildWrench()}${buildRods()}${buildPegs()}${buildThreeSpoke()}${buildMonths()}
${shadow(515,570,42,30)}${ball(490.5,526,58.6,55)}${buildNut()}${buildShaft()}
${buildGearD()}${buildGearB()}${buildGearC()}${buildCollar()}${buildHat()}
${hubGear([[907.500,818],[1009.500,817],[962,784],[957,853]],[[924.500,813],[992,812],[958,793],[957.500,835]],[945.500,799.500],28)}
${hubGear([[1044,816],[1149,815],[1098,780],[1096,852]],[[1056,812],[1136.500,811],[1096,787],[1096,837.500]],[1083,797],24)}
${shadow(1547,577,25,12)}${ball(1554,557,25,24,true)}${shadow(1577,620,26,13)}${ball(1581,599,26.5,25,true)}${shadow(1648,795,26,12)}${ball(1654.7,772,27,25.3,true)}
${axes}
</svg>`);

/* Text whose letter spacing is adjusted so that it takes a given width. Registered last, so that it is measured in its final styles. */
define('fit-text', '<style>:host{display:inline-block;white-space:pre}</style><slot></slot>', el => {
  const want = +el.getAttribute('width'), n = el.textContent.length;
  const r = el.getBoundingClientRect().width;
  if (want && r) el.style.letterSpacing = ((want + 1.5 - r) / n).toFixed(3) + 'px';
});
</script>
</body>
</html>
